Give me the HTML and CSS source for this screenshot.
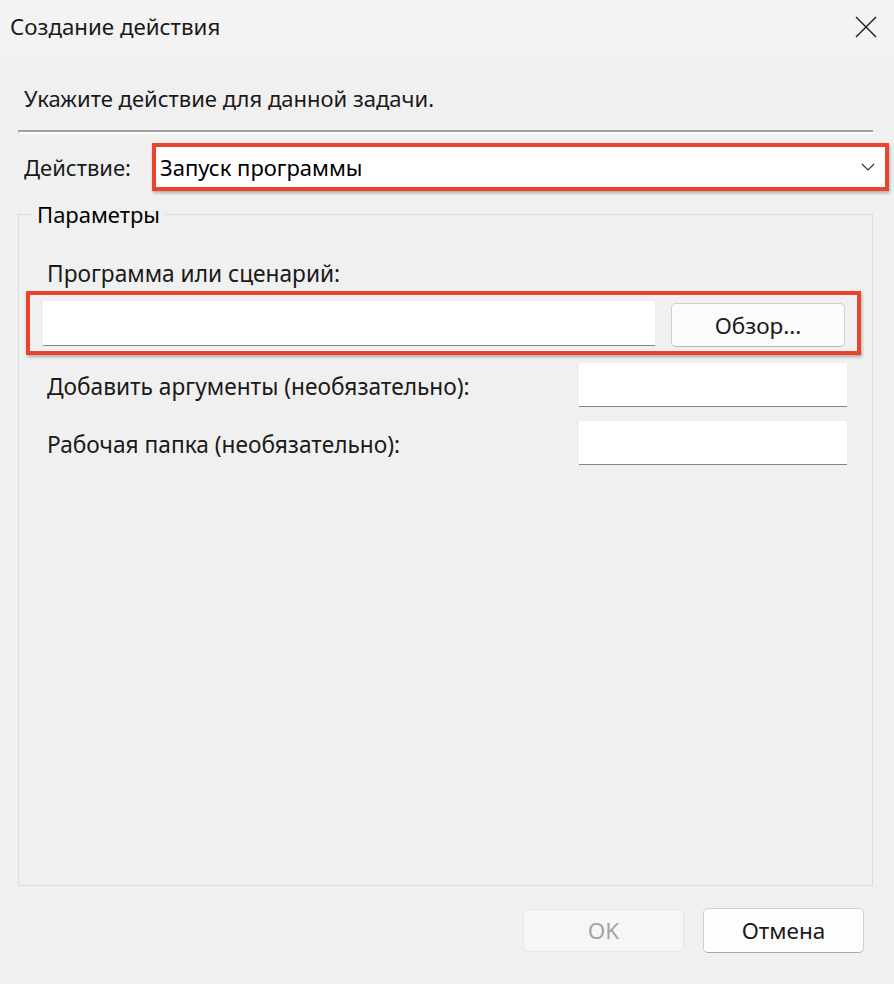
FILE: index.html
```html
<!DOCTYPE html>
<html lang="ru">
<head>
<meta charset="utf-8">
<title>Создание действия</title>
<link rel="stylesheet" href="styles.css">
</head>
<body>
<div class="dialog">
  <header class="titlebar">
    <span class="title">Создание действия</span>
    <span class="close" aria-label="Закрыть">
      <svg width="22" height="22" viewBox="0 0 22 22"><path d="M1 1 L21 21 M21 1 L1 21" stroke="#1a1a1a" stroke-width="1.4" fill="none"/></svg>
    </span>
  </header>
  <main class="content">
    <p class="instruction">Укажите действие для данной задачи.</p>
    <div class="separator"></div>
    <div class="action-row">
      <span class="label action-label">Действие:</span>
      <div class="highlight select-box">
        <div class="select">
          <span>Запуск программы</span>
          <svg class="chevron" width="14" height="8" viewBox="0 0 14 8"><path d="M1 1 L7 7 L13 1" stroke="#333" stroke-width="1.2" fill="none"/></svg>
        </div>
      </div>
    </div>
    <fieldset class="params">
      <legend>Параметры</legend>
      <div class="label field-label prog-label">Программа или сценарий:</div>
      <div class="highlight prog-box">
        <div class="input prog-input"></div>
        <div class="btn browse">Обзор...</div>
      </div>
      <div class="arg-row first">
        <span class="label field-label">Добавить аргументы (необязательно):</span>
        <div class="input small-input"></div>
      </div>
      <div class="arg-row">
        <span class="label field-label">Рабочая папка (необязательно):</span>
        <div class="input small-input"></div>
      </div>
    </fieldset>
    <div class="actions">
      <div class="btn ok">OK</div>
      <div class="btn cancel">Отмена</div>
    </div>
  </main>
</div>
</body>
</html>
```
FILE: styles.css
```css
* { box-sizing: border-box; }
html, body { margin: 0; padding: 0; }
body {
  width: 894px;
  height: 984px;
  background: #f0f0f0;
  font-family: "Noto Sans", "Open Sans", sans-serif;
  color: #000;
  overflow: hidden;
}
.dialog { width: 894px; height: 984px; }
.titlebar {
  height: 55px;
  background: #f3f3f3;
  display: flex;
  align-items: center;
  justify-content: space-between;
  padding: 0 17px 2px 10px;
}
.title { font-size: 22.3px; color: #1a1a1a; line-height: 28px; }
.close { display: flex; width: 22px; height: 22px; }
.content { padding: 0; }
.instruction {
  margin: 29px 0 0 24px;
  font-size: 22px;
  line-height: 28px;
  color: #1a1a1a;
}
.separator {
  margin: 18px 21px 0 18px;
  height: 4px;
  border-top: 2px solid #a0a0a0;
  border-left: 1px solid #a0a0a0;
  border-bottom: 2px solid #fff;
}
.label { font-size: 22px; line-height: 28px; color: #1a1a1a; white-space: nowrap; }
.field-label { font-size: 22.7px; }
.action-row {
  display: flex;
  align-items: center;
  margin-top: 9px;
  height: 48px;
}
.action-label { margin-left: 24px; width: 128px; }
.highlight {
  border: 4px solid #e8452b;
  box-shadow: 1px 2px 3px rgba(0,0,0,0.28);
}
.select-box { width: 737px; height: 48px; }
.select {
  height: 100%;
  background: #fff;
  display: flex;
  align-items: center;
  justify-content: space-between;
  padding: 0 10px 0 4px;
  font-size: 22px;
  color: #000;
}
.params {
  margin: 9px 21px 0 18px;
  padding: 0 11px 0 7px;
  border: 1px solid #dcdcdc;
  height: 686px;
  min-width: 0;
}
.params legend {
  margin-left: 6px;
  padding: 0 5px;
  font-size: 22px;
  line-height: 28px;
  color: #000;
}
.prog-label { margin: 32px 0 0 21px; }
.prog-box {
  margin-top: 3px;
  height: 64px;
  display: flex;
  align-items: flex-start;
  padding: 6px 12px 0 13px;
}
.input {
  background: #fff;
  border-bottom: 1px solid #868686;
}
.prog-input { width: 612px; height: 45px; }
.btn {
  display: flex;
  align-items: center;
  justify-content: center;
  border-radius: 5px;
  font-size: 22.5px;
}
.browse {
  margin: 2px 0 0 16px;
  width: 174px;
  height: 44px;
  background: #fbfbfb;
  border: 1px solid #d0d0d0;
  border-bottom-color: #b8b8b8;
  color: #1a1a1a;
}
.arg-row {
  display: flex;
  align-items: center;
  justify-content: space-between;
  height: 44px;
  margin: 14px 14px 0 21px;
}
.arg-row .label { padding-top: 4px; }
.arg-row.first { margin-top: 8px; }
.small-input { width: 268px; height: 44px; flex: none; }
.actions {
  display: flex;
  justify-content: flex-end;
  gap: 19px;
  margin: 22px 30px 0 0;
}
.ok {
  width: 161px;
  height: 43px;
  margin-top: 1px;
  background: #f6f6f6;
  border: 1px solid #e6e6e6;
  color: #a4a4a4;
}
.cancel {
  width: 161px;
  height: 45px;
  background: #fdfdfd;
  border: 1px solid #d0d0d0;
  border-bottom-color: #a8a8a8;
  color: #1a1a1a;
}
```
